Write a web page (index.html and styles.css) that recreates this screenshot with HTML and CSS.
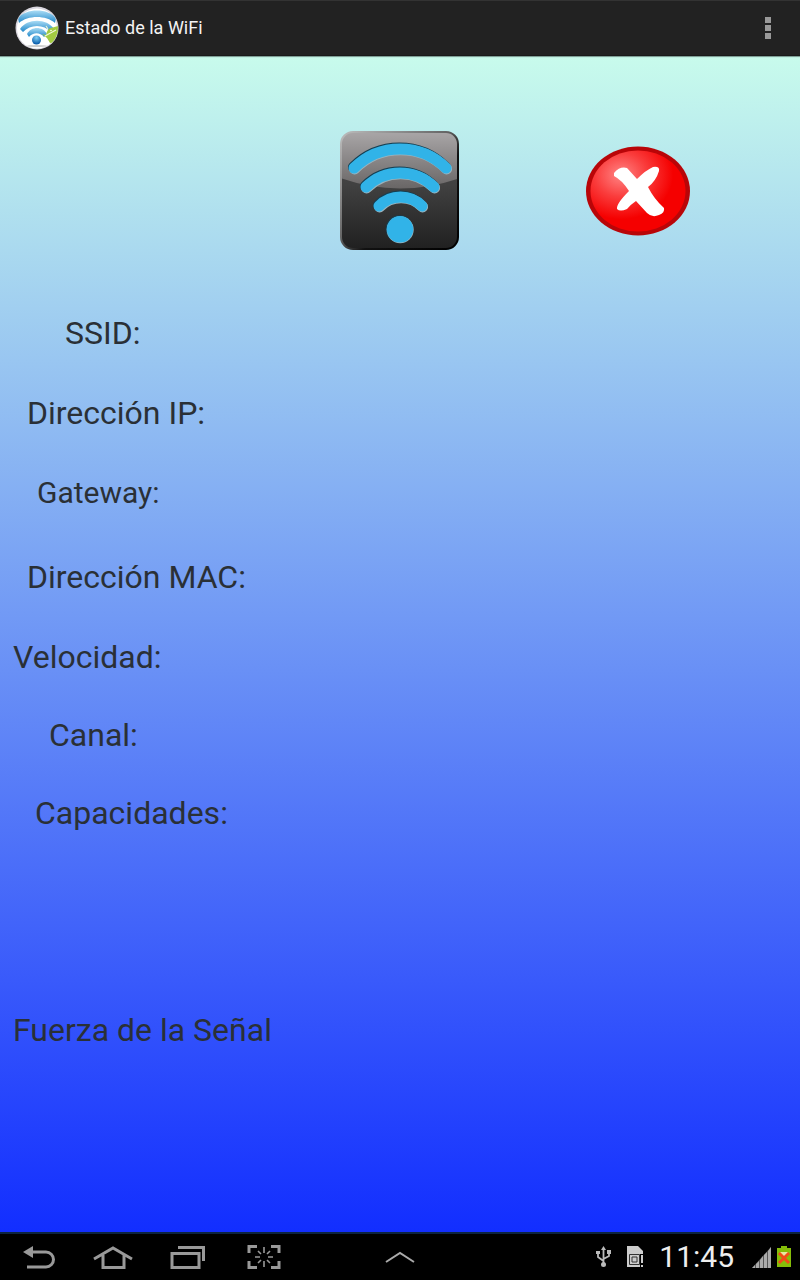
FILE: index.html
```html
<!DOCTYPE html>
<html lang="es">
<head>
  <meta charset="UTF-8" />
  <meta name="viewport" content="width=device-width, initial-scale=1.0"/>
  <title>Estado de la WiFi</title>
  <link rel="stylesheet" href="styles.css">
</head>
<body>
  <header class="action-bar">
    <svg class="app-icon" width="44" height="44" viewBox="0 0 44 44" aria-hidden="true">
      <defs>
        <linearGradient id="wave" x1="0" y1="0" x2="0" y2="1">
          <stop offset="0" stop-color="#a9dcf5"/>
          <stop offset="1" stop-color="#2187c9"/>
        </linearGradient>
        <radialGradient id="dot" cx=".5" cy=".25" r=".7">
          <stop offset="0" stop-color="#7fd0f5"/>
          <stop offset="1" stop-color="#0a5cab"/>
        </radialGradient>
        <clipPath id="round"><circle cx="22" cy="22" r="21"/></clipPath>
      </defs>
      <circle cx="22" cy="22" r="21.500" fill="#d9d6de"/>
      <g clip-path="url(#round)">
        <circle cx="22" cy="22.500" r="20" fill="#fff"/>
        <path d="M3 12C11 2 33 2 41 12L40 17C31 9 13 9 4 17Z" fill="url(#wave)"/>
        <path d="M5 23C12 12 32 12 39 23L36 26C29 18 15 18 8 26Z" fill="url(#wave)"/>
        <path d="M12 28C16 20 28 20 32 28L29 31C25 26 18 26 14 31Z" fill="url(#wave)"/>
        <ellipse cx="22" cy="40" rx="10" ry="1" fill="#ccc"/>
        <circle cx="21.500" cy="34" r="4.500" fill="url(#dot)"/>
        <path d="M27 28L31 29Q32 23 36 22L43 20V36L35 37L32 32Z" fill="#a3cb42"/>
        <path d="M30 30L41 24M33 23L31 20" stroke="#eef6d3" stroke-width="1.200"/>
        <circle cx="36" cy="24.500" r=".8" fill="#fff"/>
      </g>
    </svg>
    <h1 class="title">Estado de la WiFi</h1>
    <button class="icon-button menu-button" aria-label="Más opciones">
      <svg width="6" height="22" viewBox="0 0 6 22" fill="#999">
        <path d="M0 0h6v6H0zM0 8h6v6H0zM0 16h6v6H0z"/>
      </svg>
    </button>
  </header>

  <main class="screen">
    <div class="buttons">
      <button class="icon-button wifi-button" aria-label="WiFi">
        <svg width="120" height="120" viewBox="0 0 120 120">
          <defs>
            <linearGradient id="tile" x1="0" y1="0" x2="0" y2="1">
              <stop offset="0" stop-color="#4c4a4b"/>
              <stop offset=".45" stop-color="#414141"/>
              <stop offset="1" stop-color="#202020"/>
            </linearGradient>
            <linearGradient id="gloss" x1="0" y1="0" x2="0" y2="1">
              <stop offset="0" stop-color="#aaa7a8"/>
              <stop offset="1" stop-color="#696666"/>
            </linearGradient>
            <linearGradient id="edge" x1="0" y1="0" x2="1" y2="1">
              <stop offset="0" stop-color="#bcbcbc"/>
              <stop offset=".45" stop-color="#666"/>
              <stop offset=".6" stop-color="#111"/>
              <stop offset="1" stop-color="#000"/>
            </linearGradient>
            <clipPath id="tile-clip"><rect x="1" y="1" width="117" height="117" rx="12"/></clipPath>
          </defs>
          <rect x="1" y="1" width="117" height="117" rx="12" fill="url(#tile)"/>
          <path d="M0 0H120V47Q60 68 0 47Z" fill="url(#gloss)" clip-path="url(#tile-clip)"/>
          <rect x="1" y="1" width="117" height="117" rx="12" fill="none" stroke="url(#edge)" stroke-width="2"/>
          <g fill="none" stroke-linecap="round" stroke-width="11">
            <g stroke="#163f52" transform="translate(-.6 -.9)">
              <path d="M14 37A65 65 0 0 1 106 37"/>
              <path d="M26 56A48 48 0 0 1 94 56"/>
              <path d="M39 75A30 30 0 0 1 82 75"/>
            </g>
            <g stroke="#9bb4be" transform="translate(.6 .9)">
              <path d="M14 37A65 65 0 0 1 106 37"/>
              <path d="M26 56A48 48 0 0 1 94 56"/>
              <path d="M39 75A30 30 0 0 1 82 75"/>
            </g>
            <g stroke="#31b3e8">
              <path d="M14 37A65 65 0 0 1 106 37"/>
              <path d="M26 56A48 48 0 0 1 94 56"/>
              <path d="M39 75A30 30 0 0 1 82 75"/>
            </g>
          </g>
          <circle cx="59.500" cy="98" r="13.800" fill="#163f52"/>
          <circle cx="60.200" cy="98.800" r="13.500" fill="#9bb4be"/>
          <circle cx="60" cy="98.300" r="13.200" fill="#31b3e8"/>
        </svg>
      </button>
      <button class="icon-button close-button" aria-label="Desactivar">
        <svg width="104" height="90" viewBox="0 0 104 90">
          <defs>
            <radialGradient id="ball" cx=".32" cy=".3" r=".55">
              <stop offset="0" stop-color="#ff8585"/>
              <stop offset=".5" stop-color="#fa3c3c"/>
              <stop offset="1" stop-color="#f50000"/>
            </radialGradient>
          </defs>
          <ellipse cx="52" cy="45" rx="52" ry="44.500" fill="#b90508"/>
          <ellipse cx="52" cy="45" rx="47.500" ry="40.500" fill="url(#ball)"/>
          <path d="M28 27Q34 20 41 22L51 33Q60 24 67 21Q74 20 73 25Q70 35 62 41Q68 53 78 62Q79 67 73 69Q66 72 61 67L50 55Q44 59 41 63Q34 66 31 63Q30 58 43 45Q36 34 28 30Z" fill="#fff"/>
        </svg>
      </button>
    </div>

    <ul class="info">
      <li class="ssid">SSID:</li>
      <li class="ip">Dirección IP:</li>
      <li class="gateway">Gateway:</li>
      <li class="mac">Dirección MAC:</li>
      <li class="speed">Velocidad:</li>
      <li class="channel">Canal:</li>
      <li class="capabilities">Capacidades:</li>
      <li class="strength">Fuerza de la Señal</li>
    </ul>
  </main>

  <footer class="system-bar">
    <nav class="nav-keys">
      <button class="icon-button" aria-label="Atrás">
        <svg width="34" height="24" viewBox="0 0 34 24" fill="none" stroke="#999" stroke-width="3">
          <path d="M8 7H24A7.500 7.500 0 0 1 24 22H5"/>
          <path d="M1 7L11 1V13Z" fill="#999" stroke="none"/>
        </svg>
      </button>
      <button class="icon-button" aria-label="Inicio">
        <svg width="40" height="24" viewBox="0 0 40 24" fill="none" stroke="#999" stroke-width="3">
          <path d="M1 14L20 3L39 14M10 10V22.500H31V10"/>
        </svg>
      </button>
      <button class="icon-button" aria-label="Recientes">
        <svg width="40" height="24" viewBox="0 0 40 24" fill="none" stroke="#999" stroke-width="3">
          <path d="M2 8.500H29V22.500H2ZM8 2.500H33.500V16"/>
        </svg>
      </button>
      <button class="icon-button" aria-label="Captura de pantalla">
        <svg width="34" height="24" viewBox="0 0 34 24" fill="none" stroke="#999">
          <path d="M2 8V1.500H10M24 1.500H32V8M32 16V22.500H24M10 22.500H2V16" stroke-width="3"/>
          <path d="M17 2V8M17 16V22M8 12H13M21 12H26M11 6L14 9M23 6L20 9M11 18L14 15M23 18L20 15" stroke-width="1.600"/>
        </svg>
      </button>
    </nav>
    <button class="icon-button" aria-label="Abrir panel">
      <svg width="30" height="12" viewBox="0 0 30 12" fill="none" stroke="#aaa" stroke-width="2">
        <path d="M1 11L15 2L29 11"/>
      </svg>
    </button>
    <div class="status">
      <svg class="usb" width="16" height="22" viewBox="0 0 16 22" fill="none" stroke="#bbb" stroke-width="1.800">
        <path d="M7.500 3V18M2 7V11L7.500 15M13 6V10L7.500 13"/>
        <path d="M7.500 0L10 4H5Z" fill="#bbb" stroke="none"/>
        <circle cx="7.500" cy="18.500" r="2.500" fill="#bbb" stroke="none"/>
        <path d="M0 5h4v3H0zM11 4h4v4h-4z" fill="#bbb" stroke="none"/>
      </svg>
      <svg class="sim" width="17" height="22" viewBox="0 0 17 22">
        <path d="M0 0H11L16 5V21H0Z" fill="#ccc"/>
        <path d="M2.500 8.500H12.500V18.500H2.500ZM5 11H10V16H5Z" fill="none" stroke="#333"/>
        <path d="M13 8H17V22H13Z" fill="#000"/>
        <path d="M14 9H16V17H14ZM14 19H16V21H14Z" fill="#ccc"/>
      </svg>
      <time class="clock">11:45</time>
      <svg class="signal" width="19" height="21" viewBox="0 0 19 21">
        <path d="M0 21L19 0V21Z" fill="#555"/>
        <path d="M0 21L3 18V21ZM4 17L7 14V21H4ZM8 13L11 9V21H8ZM12 8L15 5V21H12ZM16 4L19 0V21H16Z" fill="#aaa"/>
      </svg>
      <svg width="14" height="22" viewBox="0 0 14 22">
        <path d="M4 0H10V2H14V21H0V2H4Z" fill="#85bd09"/>
        <path d="M3 6H11V10H3Z" fill="#e8e8a0"/>
        <path d="M2 7L12 17M12 7L2 17" stroke="#f04b18" stroke-width="3"/>
      </svg>
    </div>
  </footer>
</body>
</html>
```
FILE: styles.css
```css
* {
  box-sizing: border-box;
}
body {
  margin: 0;
  min-height: 100vh;
  display: flex;
  flex-direction: column;
  font-family: Roboto, sans-serif;
  background-color: #000;
}
svg {
  display: block;
}
.icon-button {
  padding: 0;
  border: none;
  background: none;
  cursor: pointer;
}

/* top bar */
.action-bar {
  display: flex;
  align-items: center;
  height: 56px;
  padding: 0 16px 0 15px;
  background-color: #222;
  border-top: 1px solid #333;
  border-bottom: 1px solid #1a1a1a;
}
.title {
  flex: 1;
  margin: 0 0 0 6px;
  font-size: 18px;
  line-height: 24px;
  font-weight: 400;
  color: #f3f3f3;
}
.menu-button {
  display: flex;
  justify-content: center;
  width: 32px;
}

/* content */
.screen {
  flex: 1;
  padding-top: 75px;
  background: linear-gradient(#c8fbec, #122eff);
  box-shadow: inset 0 2px 1px -1px rgba(0, 0, 0, 0.4);
}
.buttons {
  display: grid;
  grid-template-columns: 1fr 120px 1fr;
  align-items: center;
}
.wifi-button {
  grid-column: 2;
}
.close-button {
  margin-left: 126px;
  justify-self: start;
}
.info {
  list-style: none;
  margin: 0;
  padding: 62px 13px 0;
  font-size: 32px;
  line-height: 40px;
  color: #2a3036;
}
.info li {
  margin-bottom: 40px;
}
.info .ssid {
  padding-left: 52px;
}
.info .ip,
.info .mac {
  padding-left: 14px;
}
.info .gateway {
  padding-left: 24px;
  margin-bottom: 44px;
  font-size: 30px;
}
.info .speed,
.info .channel {
  margin-bottom: 38px;
}
.info .channel {
  padding-left: 36px;
}
.info .capabilities {
  padding-left: 22px;
  margin-bottom: 177px;
}

/* bottom bar */
.system-bar {
  display: grid;
  grid-template-columns: 1fr 30px 1fr;
  align-items: center;
  height: 48px;
  padding: 0 9px;
  border-top: 2px solid #0c2440;
  background-color: #000;
}
.nav-keys {
  display: flex;
  align-items: center;
  gap: 37px;
  padding-left: 13px;
}
.status {
  display: flex;
  align-items: center;
  justify-content: flex-end;
}
.usb,
.sim {
  margin-right: 15px;
}
.clock {
  font-size: 30px;
  line-height: 40px;
  color: #eee;
}
.signal {
  margin: 0 6px 0 18px;
}
```
